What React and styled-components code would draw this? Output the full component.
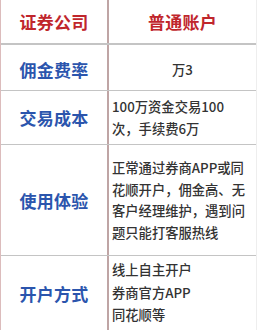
import React from "react";
import styled, { createGlobalStyle } from "styled-components";

const Global = createGlobalStyle`
  html, body { margin: 0; padding: 0; background: #fff; }
  body { font-family: "Noto Sans CJK SC", "Noto Sans", sans-serif; }
`;

const Table = styled.div`
  width: 257px;
  height: 330px;
  box-sizing: border-box;
  display: grid;
  grid-template-columns: 106px 2px 1fr;
  grid-template-rows: 43px 2px 45px 1px 53px 1px 110px 1px 1fr;
  border-left: 1px solid #dcbcbc;
  border-right: 1px solid #eeeeee;
  overflow: hidden;
  background: #fff;
`;

const Cell = styled.div`
  display: flex;
  align-items: center;
  justify-content: ${(p) => (p.$center ? "center" : "flex-start")};
  padding: ${(p) => (p.$center ? "0" : "0 2px 0 3px")};
  padding-top: ${(p) => p.$shift || 0}px;
  box-sizing: border-box;
`;

const Head = styled.span`
  color: #c0262c;
  font-size: 17px;
  font-weight: 700;
  letter-spacing: 0.2px;
`;

const Label = styled.span`
  color: #2b55ad;
  font-size: 17px;
  font-weight: 700;
  letter-spacing: 0.2px;
`;

const Value = styled.div`
  color: #333;
  font-size: 13.3px;
  line-height: ${(p) => p.$lh || 21.5}px;
  font-weight: 500;
`;

const VLine = styled.div`
  background: #bfa5a5;
`;

const HLine = styled.div`
  grid-column: 1 / -1;
  background: #c4c4c4;
`;

export default function App() {
  return (
    <>
      <Global />
      <Table>
        <Cell $center><Head>证券公司</Head></Cell>
        <VLine />
        <Cell $center><Head>普通账户</Head></Cell>
        <HLine />

        <Cell $center $shift={4}><Label>佣金费率</Label></Cell>
        <VLine />
        <Cell $center $shift={4}><Value>万3</Value></Cell>
        <HLine />

        <Cell $center><Label>交易成本</Label></Cell>
        <VLine />
        <Cell><Value $lh={22}>100万资金交易100<br />次，手续费6万</Value></Cell>
        <HLine />

        <Cell $center><Label>使用体验</Label></Cell>
        <VLine />
        <Cell>
          <Value>正常通过券商APP或同<br />花顺开户，佣金高、无<br />客户经理维护，遇到问<br />题只能打客服热线</Value>
        </Cell>
        <HLine />

        <Cell $center><Label>开户方式</Label></Cell>
        <VLine />
        <Cell>
          <Value $lh={22.5}>线上自主开户<br />券商官方APP<br />同花顺等</Value>
        </Cell>
      </Table>
    </>
  );
}
